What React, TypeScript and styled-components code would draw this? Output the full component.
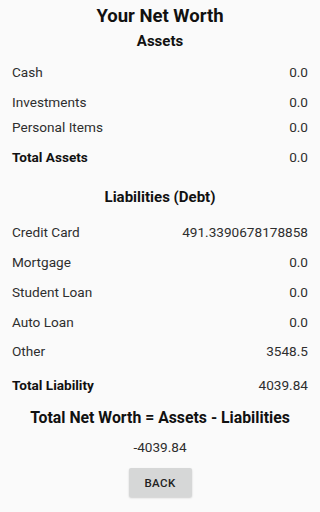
import React from "react";
import styled, { createGlobalStyle } from "styled-components";

const Global = createGlobalStyle`
  html, body { margin: 0; padding: 0; background: #fafafa; }
  body { font-family: Roboto, "Noto Sans", sans-serif; -webkit-font-smoothing: antialiased; }
`;

const Screen = styled.div`
  width: 320px;
  height: 512px;
  box-sizing: border-box;
  background: #fafafa;
  padding: 6px 12px 0 12px;
  display: flex;
  flex-direction: column;
  align-items: stretch;
  overflow: hidden;
`;

const Title = styled.h1`
  margin: 0;
  font-size: 18.5px;
  line-height: 21px;
  font-weight: 700;
  color: #111;
  text-align: center;
`;

const Heading = styled.h2<{ $space: number }>`
  margin: ${(p) => p.$space}px 0 0 0;
  font-size: 15px;
  line-height: 18px;
  font-weight: 700;
  color: #111;
  text-align: center;
`;

const Row = styled.div<{ $space: number }>`
  margin-top: ${(p) => p.$space}px;
  display: flex;
  justify-content: space-between;
  align-items: center;
  height: 16px;
  font-size: 13.6px;
  line-height: 16px;
`;

const Label = styled.span<{ $bold?: boolean }>`
  color: ${(p) => (p.$bold ? "#111" : "#2e2e2e")};
  font-weight: ${(p) => (p.$bold ? 700 : 400)};
`;

const Value = styled.span`
  color: #2e2e2e;
`;

const Summary = styled.div`
  margin-top: 15px;
  font-size: 15.8px;
  line-height: 19px;
  font-weight: 700;
  color: #111;
  text-align: center;
`;

const Result = styled.div`
  margin-top: 12px;
  font-size: 13.6px;
  line-height: 16px;
  color: #2e2e2e;
  text-align: center;
`;

const BackButton = styled.button`
  align-self: center;
  margin-top: 13px;
  width: 63px;
  height: 29px;
  border: none;
  border-radius: 2px;
  background: #d6d7d7;
  box-shadow: 0 1px 2px rgba(0, 0, 0, 0.18);
  font-family: Roboto, "Noto Sans", sans-serif;
  font-size: 11.5px;
  font-weight: 500;
  letter-spacing: 0.4px;
  color: #222;
  padding: 0;
`;

type Item = { label: string; value: string; space: number; bold?: boolean };

const assets: Item[] = [
  { label: "Cash", value: "0.0", space: 14 },
  { label: "Investments", value: "0.0", space: 14 },
  { label: "Personal Items", value: "0.0", space: 9 },
  { label: "Total Assets", value: "0.0", space: 14, bold: true },
];

const liabilities: Item[] = [
  { label: "Credit Card", value: "491.3390678178858", space: 18 },
  { label: "Mortgage", value: "0.0", space: 14 },
  { label: "Student Loan", value: "0.0", space: 14 },
  { label: "Auto Loan", value: "0.0", space: 14 },
  { label: "Other", value: "3548.5", space: 13 },
  { label: "Total Liability", value: "4039.84", space: 18, bold: true },
];

const renderRows = (items: Item[]) =>
  items.map((it) => (
    <Row key={it.label} $space={it.space}>
      <Label $bold={it.bold}>{it.label}</Label>
      <Value>{it.value}</Value>
    </Row>
  ));

export default function App() {
  return (
    <>
      <Global />
      <Screen>
        <Title>Your Net Worth</Title>
        <Heading $space={5}>Assets</Heading>
        {renderRows(assets)}
        <Heading $space={23}>Liabilities (Debt)</Heading>
        {renderRows(liabilities)}
        <Summary>Total Net Worth = Assets - Liabilities</Summary>
        <Result>-4039.84</Result>
        <BackButton>BACK</BackButton>
      </Screen>
    </>
  );
}
